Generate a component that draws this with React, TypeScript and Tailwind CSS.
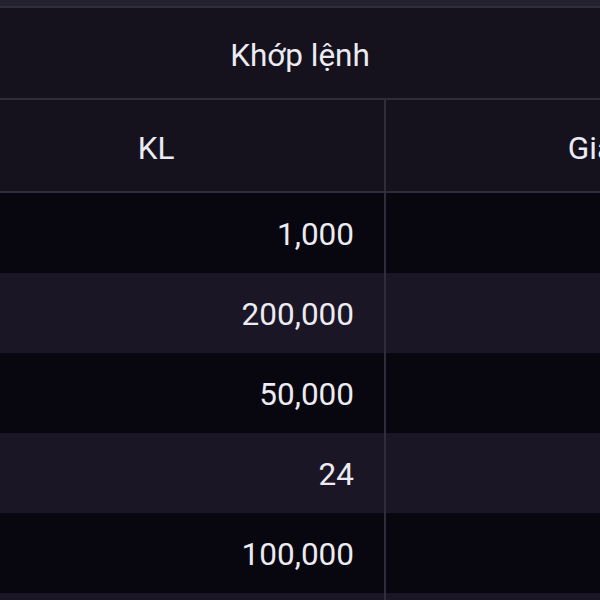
const rows = [
  { kl: '1,000' },
  { kl: '200,000' },
  { kl: '50,000' },
  { kl: '24' },
  { kl: '100,000' },
  { kl: '' },
];

export default function App() {
  return (
    <div className="w-[600px] h-[600px] overflow-hidden bg-[#08060f] text-[#ecebf2] font-['Roboto',sans-serif] text-[31.5px] leading-none">
      <div className="h-[8px] bg-[#25222f] border-b-2 border-[#302c3c]" />
      <div className="h-[92px] flex items-center justify-center pt-[5px] bg-[#15121e] border-b-2 border-[#302c3c]">
        Khớp lệnh
      </div>
      <div className="grid grid-cols-[386px_410px] w-[796px]">
        <div className="h-[93px] flex items-center justify-center pt-[6px] pr-[72px] bg-[#15121e] border-r-2 border-b-2 border-[#302c3c]">
          KL
        </div>
        <div className="h-[93px] flex items-center justify-center pt-[6px] bg-[#15121e] border-b-2 border-[#302c3c]">
          Giá
        </div>
        {rows.map((r, i) => (
          <div key={i} className="contents">
            <div
              className={`h-[80px] flex items-center justify-end pt-[3px] pr-[30px] border-r-2 border-[#302c3c] ${
                i % 2 === 1 ? 'bg-[#1a1626]' : 'bg-[#08060f]'
              }`}
            >
              {r.kl}
            </div>
            <div className={`h-[80px] ${i % 2 === 1 ? 'bg-[#1a1626]' : 'bg-[#08060f]'}`} />
          </div>
        ))}
      </div>
    </div>
  );
}
